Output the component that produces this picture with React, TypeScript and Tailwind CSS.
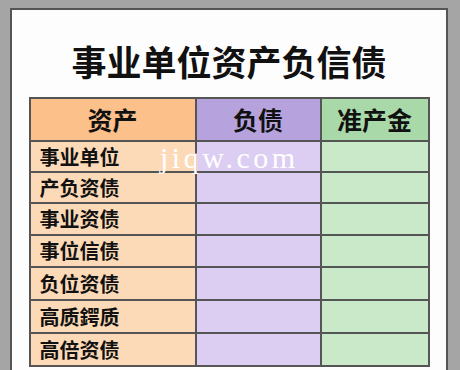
import React from "react";

const rows: { label: string; h: string }[] = [
  { label: "事业单位", h: "h-[29px]" },
  { label: "产负资债", h: "h-[29px]" },
  { label: "事业资债", h: "h-[30px]" },
  { label: "事位信债", h: "h-[30px]" },
  { label: "负位资债", h: "h-[31px]" },
  { label: "高质鍔质", h: "h-[31px]" },
  { label: "高倍资债", h: "h-[31px]" },
];

const cjk = "font-['Noto_Sans_CJK_SC','Noto_Sans',sans-serif]";

export default function App() {
  return (
    <div className="relative w-[460px] h-[370px] overflow-hidden bg-[#a5a5a5] pt-[8px] pl-[10px]">
      <div className="w-[438px] h-[400px] bg-[#fdfdfd] border-2 border-[#555555]">
        <div
          className={`mt-[28px] h-[44px] flex items-center justify-center text-[35px] leading-none font-bold text-[#111111] ${cjk}`}
        >
          事业单位资产负信债
        </div>
        <div className="mt-[15px] mx-auto w-[401px] bg-[#555555] p-[2px] grid grid-cols-[164px_123px_106px] gap-[2px]">
          <div className={`h-[41px] bg-[#fcc08a] flex items-center justify-center text-[25px] font-bold text-[#111111] ${cjk}`}>
            资产
          </div>
          <div className={`h-[41px] bg-[#b6a2dc] flex items-center justify-center text-[25px] font-bold text-[#111111] ${cjk}`}>
            负债
          </div>
          <div className={`h-[41px] bg-[#a9d8a9] flex items-center justify-center text-[25px] font-bold text-[#111111] ${cjk}`}>
            准产金
          </div>
          {rows.map((r) => (
            <React.Fragment key={r.label}>
              <div
                className={`${r.h} bg-[#fddab7] flex items-center pl-[9px] text-[20px] font-bold text-[#111111] ${cjk}`}
              >
                {r.label}
              </div>
              <div className={`${r.h} bg-[#dccdf3]`} />
              <div className={`${r.h} bg-[#c9e9c8]`} />
            </React.Fragment>
          ))}
        </div>
      </div>
      <div className="absolute left-[160px] top-[143px] text-[30px] leading-none tracking-[3.5px] text-white font-['Liberation_Serif',serif]">
        jiqw.com
      </div>
    </div>
  );
}
